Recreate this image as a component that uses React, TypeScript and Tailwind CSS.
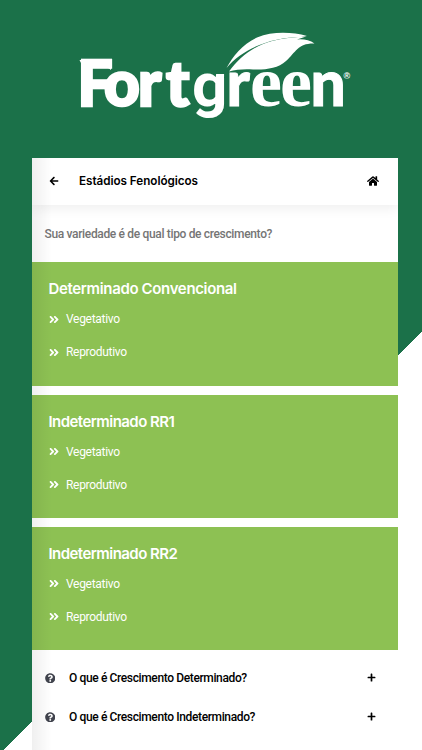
import React from 'react';
import { FaArrowLeft, FaHome, FaAngleDoubleRight, FaQuestionCircle, FaPlus } from 'react-icons/fa';
import clsx from 'clsx';

const groups = ['Determinado Convencional', 'Indeterminado RR1', 'Indeterminado RR2'];
const stages = ['Vegetativo', 'Reprodutivo'];
const questions = ['O que é Crescimento Determinado?', 'O que é Crescimento Indeterminado?'];

function Logo() {
  return (
    <svg width="422" height="158" viewBox="0 0 422 158" className="block shrink-0 fill-white">
      <text y="105.5" className="font-[Lato,sans-serif] text-[62px] font-black">
        <tspan x="77.5 104 138 166" className="stroke-white stroke-[2.5px]">Fort</tspan>
        <tspan x="192" className="font-[Roboto,sans-serif] text-[62px] font-bold">g</tspan>
        <tspan x="226.5" className="stroke-white stroke-1">r</tspan>
        <tspan x="250 280" className="font-['Liberation_Serif',serif] text-[72px] font-bold">ee</tspan>
        <tspan x="310.5" className="stroke-white stroke-1">n</tspan>
        <tspan x="343.5" y="79" className="font-['Liberation_Sans',sans-serif] text-[9px] font-bold">®</tspan>
      </text>
      {/* Serif on the F */}
      <path d="M79.5 60 H111 V70 Q108 67 103 67 H83Z" />
      {/* Leaf */}
      <path d="M226.5 68 C233 56 243 44 257 37.5 C273 31 292 32 307 36 L301 37 C273 37 243 48 226.5 68Z" />
      <path d="M229 71.5 C239 58 253 46 272 41 C284 38 296 37 306 36.5 L297 39.5 Q307 38.5 314.5 43.5 C298 43 296 52 286 61 C278 68.5 265 70 253 69.5 C244 69 236 69.5 229 71.5Z" />
    </svg>
  );
}

function GroupCard({ title }: { title: string }) {
  return (
    <section className="h-[123.5px] bg-[#8dc153] pl-[17px] pt-[17px] text-white">
      <h2
        className={clsx(
          'h-5 whitespace-nowrap font-[Inter,sans-serif] text-[15px] font-semibold leading-5',
          title.length > 20 ? 'tracking-[-0.35px]' : 'tracking-[-0.55px]'
        )}
      >
        {title}
      </h2>
      <ul className="pt-[3.5px]">
        {stages.map((stage) => (
          <li key={stage} className="flex h-[33px] items-center text-[12px] tracking-[-0.3px]">
            <FaAngleDoubleRight className="h-[13px] w-[10px]" />
            <span className="ml-[7.5px]">{stage}</span>
          </li>
        ))}
      </ul>
    </section>
  );
}

export default function App() {
  return (
    <div className="flex h-[750px] w-[422px] flex-col overflow-hidden bg-white bg-[linear-gradient(to_bottom_right,#1b7149_50%,#fff_50%)] bg-[length:753px_753px] bg-no-repeat font-[Roboto,sans-serif]">
      <Logo />
      <main className="relative ml-[31.5px] h-[592px] w-[366.5px] overflow-hidden bg-white">
        <header className="relative flex h-[47px] items-center bg-white pl-[17.5px] pr-[19px] text-black shadow-[0_3px_12px_rgba(0,0,0,0.07)]">
          <FaArrowLeft className="mb-[2px] h-[10px] w-[10px]" />
          <h1 className="ml-5 whitespace-nowrap pt-px font-[Inter,sans-serif] text-[11.7px] font-semibold tracking-[-0.04px]">Estádios Fenológicos</h1>
          <FaHome className="mb-[2px] ml-auto h-[12px] w-[12px]" />
        </header>
        <p className="flex h-[57.25px] items-center pl-[13px] text-[12px] font-medium tracking-[-0.34px] text-[#757575]">
          Sua variedade é de qual tipo de crescimento?
        </p>
        <div className="flex flex-col gap-[8.75px]">
          {groups.map((title) => (
            <GroupCard key={title} title={title} />
          ))}
        </div>
        <div className="pt-[8px]">
          {questions.map((question) => (
            <div key={question} className="flex h-[39px] items-center pl-[13px] pr-[22.5px] text-[12px] font-medium tracking-[-0.37px] text-black">
              <FaQuestionCircle className="h-[10.5px] w-[10.5px] text-[#40434d]" />
              <span className="ml-[14px]">{question}</span>
              <FaPlus className="ml-auto h-[9px] w-[9px]" />
            </div>
          ))}
        </div>
        {/* Soft shade on the left edge of the panel */}
        <div className="pointer-events-none absolute inset-y-0 left-0 w-5 bg-linear-to-r from-black/6 to-transparent" />
      </main>
    </div>
  );
}
